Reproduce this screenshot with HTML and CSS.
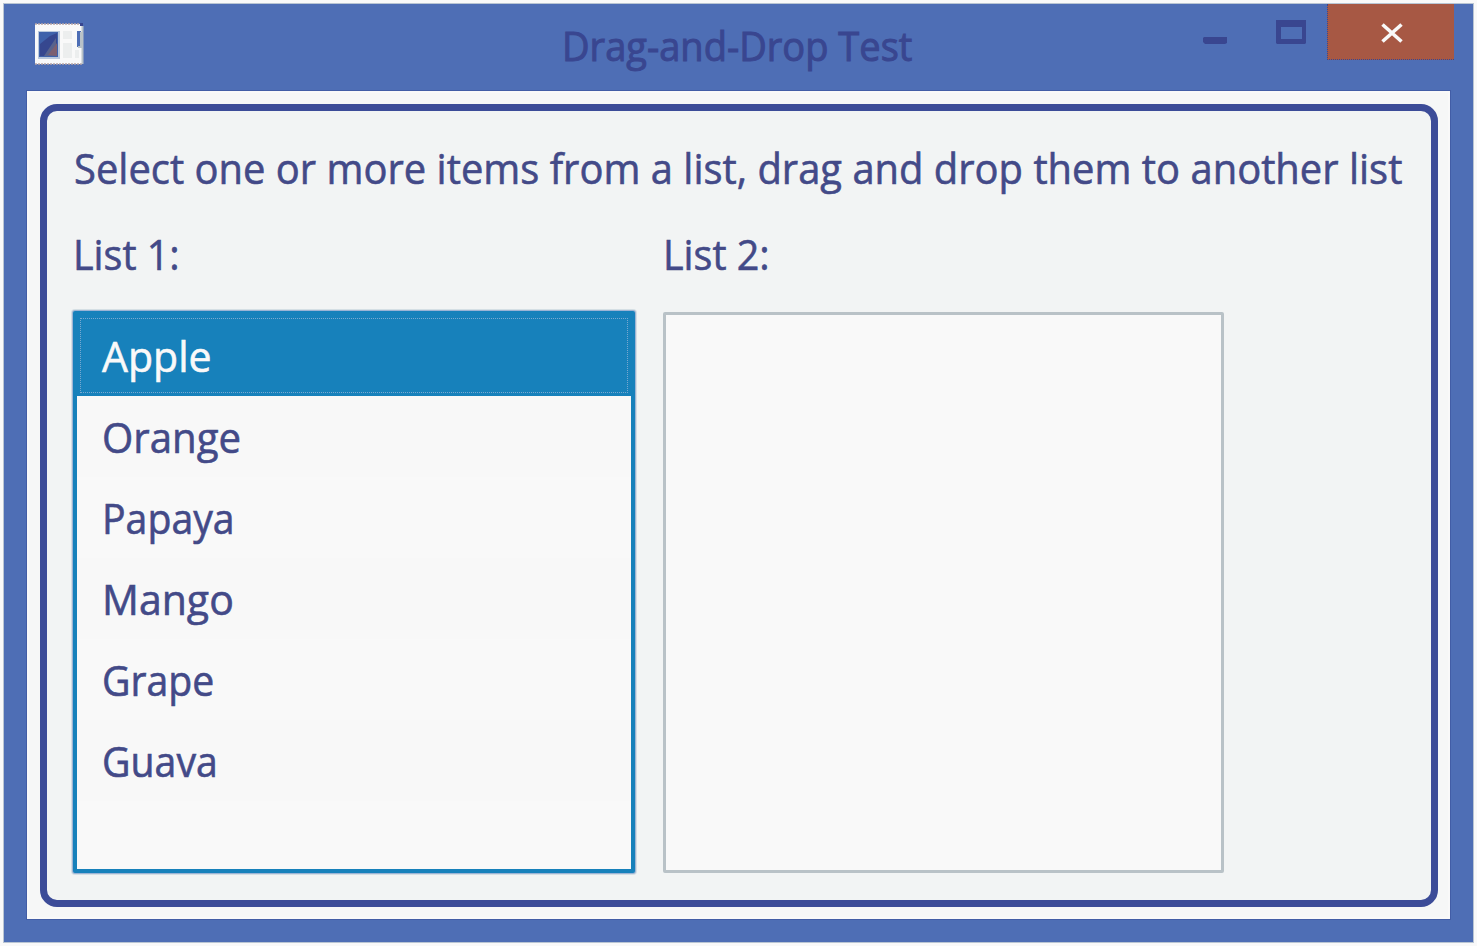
FILE: index.html
```html
<!DOCTYPE html>
<html lang="en">
<head>
<meta charset="utf-8">
<title>Drag-and-Drop Test</title>
<link rel="stylesheet" href="styles.css">
</head>
<body>
<div class="window">
  <header class="titlebar">
    <svg class="app-icon" width="52" height="44" viewBox="0 0 52 44">
      <path d="M2 1H50V41H2Z" fill="#f9f9f9"/>
      <path d="M2 1H48M2 41H50" stroke="#b8a5a5" stroke-width="1.5" stroke-dasharray="2 1"/>
      <path d="M49.5 3V41" stroke="#b9c2c8" stroke-width="2"/>
      <path d="M5 8H27V36H5Z" fill="#b9c8dc"/>
      <path d="M6 9H25V34H6Z" fill="#3f62ab"/>
      <path d="M7 33V21L17 13L24 10V33Z" fill="#36478f"/>
      <path d="M11 33L23 15V33Z" fill="#58638d"/>
      <path d="M15 32L24 20V33Z" fill="#7c5f70"/>
      <path d="M30 8H39V16H30ZM30 20H39V35H30ZM42 27H46V35H42Z" fill="#eceeee"/>
      <path d="M44 8H48V24H44Z" fill="#4e6eb5"/>
      <path d="M47 9H50V25H45V23H47Z" fill="#b9c2c8"/>
      <path d="M47 0H50V3H47Z" fill="#394690"/>
    </svg>
    <h1 class="title"><span class="fit fit-title">Drag-and-Drop Test</span></h1>
    <div class="controls">
      <svg class="minimize" width="25" height="8" viewBox="0 0 25 8"><path d="M1 0H24V6L22 7H2L0 5V1Z" fill="#394690"/></svg>
      <svg class="maximize" width="30" height="24" viewBox="0 0 30 24"><path d="M0 0H30V23L29 24H1L0 23ZM5 7V19H26V7Z" fill="#394690" fill-rule="evenodd"/></svg>
      <div class="close"><svg width="22" height="20" viewBox="0 0 22 20"><path d="M1.5 1.5L20.5 18.5M20.5 1.5L1.5 18.5" fill="none" stroke="#f9f9f9" stroke-width="3.6"/></svg></div>
    </div>
  </header>
  <main class="client">
    <section class="panel">
      <p class="hint"><span class="fit fit-hint">Select one or more items from a list, drag and drop them to another list</span></p>
      <div class="lists">
        <div class="column">
          <p class="label"><span class="fit fit-label">List 1:</span></p>
          <ul class="list focused">
            <li class="item selected"><span class="fit fit-wide">Apple</span></li>
            <li class="item"><span class="fit">Orange</span></li>
            <li class="item"><span class="fit fit-narrow">Papaya</span></li>
            <li class="item"><span class="fit fit-wide">Mango</span></li>
            <li class="item"><span class="fit fit-narrow">Grape</span></li>
            <li class="item"><span class="fit fit-narrow">Guava</span></li>
          </ul>
        </div>
        <div class="column">
          <p class="label"><span class="fit fit-label">List 2:</span></p>
          <ul class="list"></ul>
        </div>
      </div>
    </section>
  </main>
</div>
</body>
</html>
```
FILE: styles.css
```css
* { box-sizing: border-box; margin: 0; padding: 0; }
body {
  height: 946px;
  padding: 4px;
  overflow: hidden;
  background: #f9f9f9;
  color: #434a88;
  font: 42px "Open Sans", "Noto Sans", sans-serif;
}
.window {
  width: 1469px;
  height: 938px;
  padding: 0 22px 22px;
  background: #4e6eb5;
  box-shadow: 0 0 0 1px #b9c5d3;
}
.titlebar {
  display: grid;
  grid-template-columns: 536px 1fr auto;
  height: 86px;
  align-items: start;
}
.app-icon { margin: 19px 0 0 7px; }
.title {
  color: #394690;
  font-size: 40px;
  font-weight: 400;
  line-height: 84px;
  white-space: nowrap;
}
.controls { display: flex; width: 252px; margin-right: -3px; }
.minimize { margin: 33px 0 0 1px; }
.maximize { margin: 16px 0 0 48px; }
.close {
  display: flex;
  align-items: center;
  justify-content: center;
  flex: none;
  width: 127px;
  height: 56px;
  margin-left: auto;
  padding: 2px 0 0 2px;
  background: #a75844;
  border-left: 1px dotted #394690;
  border-bottom: 1px dotted #394690;
}
.client {
  height: 830px;
  padding: 13px 12px 12px 13px;
  background: #f6f7f7;
  border: 1px solid #425da6;
  box-shadow: inset 0 0 0 2px #f9f9f9;
}
.panel {
  height: 803px;
  padding: 23px 26px 0;
  background: #f2f4f4;
  border: 7px solid #3c4c98;
  border-radius: 17px;
}
.fit {
  display: inline-block;
  transform: scaleX(0.957);
  transform-origin: 0 50%;
  white-space: nowrap;
  -webkit-text-stroke: 0.6px currentColor;
}
.fit-title { transform: scaleX(0.951); -webkit-text-stroke-width: 1px; }
.fit-hint { transform: scaleX(0.9505); }
.fit-label { transform: scaleX(0.94); }
.fit-wide { transform: scaleX(0.977); }
.fit-narrow { transform: scaleX(0.934); }
.hint { height: 65px; padding-left: 1px; line-height: 67px; }
.label { height: 112px; line-height: 110px; }
.lists { display: flex; gap: 28px; }
.column { width: 562px; }
.list {
  width: 561px;
  height: 561px;
  margin-top: 1px;
  list-style: none;
  background: #f9f9f9;
  border: 3px solid #b9c2c7;
  border-radius: 2px;
}
.list.focused {
  width: 562px;
  height: 562px;
  margin-top: 0;
  border: 4px solid #1781bb;
  box-shadow: 0 0 0 1px #9db4d5, 0 0 0 2px #d5dfe4;
}
.item { height: 81px; padding-left: 25px; line-height: 81px; }
.item:nth-child(even) { background: #f8f8f8; }
.item.selected {
  background: #1781bb;
  color: #f9f9f9;
  outline: 1px dotted #78a8d0;
  outline-offset: -4px;
}
```
